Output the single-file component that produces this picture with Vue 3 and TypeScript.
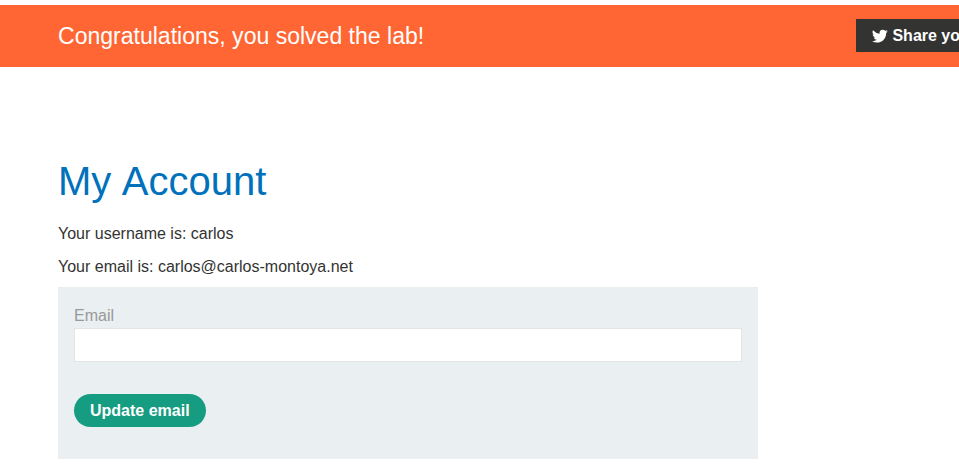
<script setup lang="ts">
import { ref } from 'vue'

const username = 'carlos'
const currentEmail = 'carlos@carlos-montoya.net'
const email = ref<string>('')
</script>

<template>
  <div class="page">
    <header class="banner">
      <h4 class="banner-title">Congratulations, you solved the lab!</h4>
      <button class="share" type="button">
        <svg class="bird" viewBox="0 0 24 24" aria-hidden="true">
          <path d="M23.6 4.9a9.6 9.6 0 0 1-2.8.8 4.9 4.9 0 0 0 2.1-2.7 9.7 9.7 0 0 1-3.1 1.2 4.85 4.85 0 0 0-8.3 4.4A13.8 13.8 0 0 1 1.6 3.5a4.85 4.85 0 0 0 1.5 6.5 4.8 4.8 0 0 1-2.2-.6v.1a4.85 4.85 0 0 0 3.9 4.7 4.9 4.9 0 0 1-2.2.1 4.85 4.85 0 0 0 4.5 3.4A9.7 9.7 0 0 1 0 19.7 13.7 13.7 0 0 0 7.4 21.9c9 0 14.2-7.6 13.8-14.5a9.8 9.8 0 0 0 2.4-2.5z" />
        </svg>
        <span>Share your skills!</span>
      </button>
    </header>
    <main class="content">
      <h1>My Account</h1>
      <p>Your username is: {{ username }}</p>
      <p>Your email is: {{ currentEmail }}</p>
      <form class="email-form" @submit.prevent>
        <label for="email">Email</label>
        <input id="email" v-model="email" type="email" />
        <button class="update" type="submit">Update email</button>
      </form>
    </main>
  </div>
</template>

<style>
body {
  background: #fff;
}
</style>

<style scoped>
.page {
  box-sizing: border-box;
  height: 476px;
  padding-top: 5px;
  overflow: hidden;
  font: 16px/20px "Liberation Sans", Arial, sans-serif;
  color: #333332;
}
.banner {
  display: flex;
  align-items: flex-start;
  box-sizing: border-box;
  height: 62px;
  padding: 14px 0 0 58px;
  background: #ff6633;
  color: #fff;
}
.banner-title {
  flex: 0 0 798px;
  margin: 0;
  font-size: 23.04px;
  font-weight: 400;
  line-height: 34px;
  white-space: nowrap;
}
.share {
  display: flex;
  flex: none;
  align-items: center;
  gap: 4.45px;
  box-sizing: border-box;
  height: 33px;
  padding: 1px 16px 0;
  border: 0;
  background: #333332;
  color: #fff;
  font: bold 16px/20px "Liberation Sans", Arial, sans-serif;
  white-space: nowrap;
}
.bird {
  width: 16px;
  height: 16px;
  fill: #fff;
}
.content {
  width: 700px;
  padding: 90px 0 0 58px;
}
h1 {
  margin: 0 0 19px;
  color: #0071ba;
  font-size: 40px;
  font-weight: 400;
  line-height: 48px;
  word-spacing: 1.6px;
}
p {
  margin: 0 0 13px;
}
.email-form {
  display: flex;
  flex-direction: column;
  align-items: flex-start;
  box-sizing: border-box;
  width: 700px;
  height: 172px;
  margin-top: -3px;
  padding: 19px 16px 0;
  background: #eaeff2;
}
label {
  color: #999;
}
input {
  box-sizing: border-box;
  width: 668px;
  height: 34px;
  margin: 2px 0 32px;
  padding: 6px 8px;
  border: 1px solid #e4e4e4;
  outline: none;
  background: #fff;
  font: inherit;
}
.update {
  height: 33px;
  padding: 0 16px;
  border: 0;
  border-radius: 17px;
  background: #159c81;
  color: #fff;
  font: bold 16px/20px "Liberation Sans", Arial, sans-serif;
}
</style>
